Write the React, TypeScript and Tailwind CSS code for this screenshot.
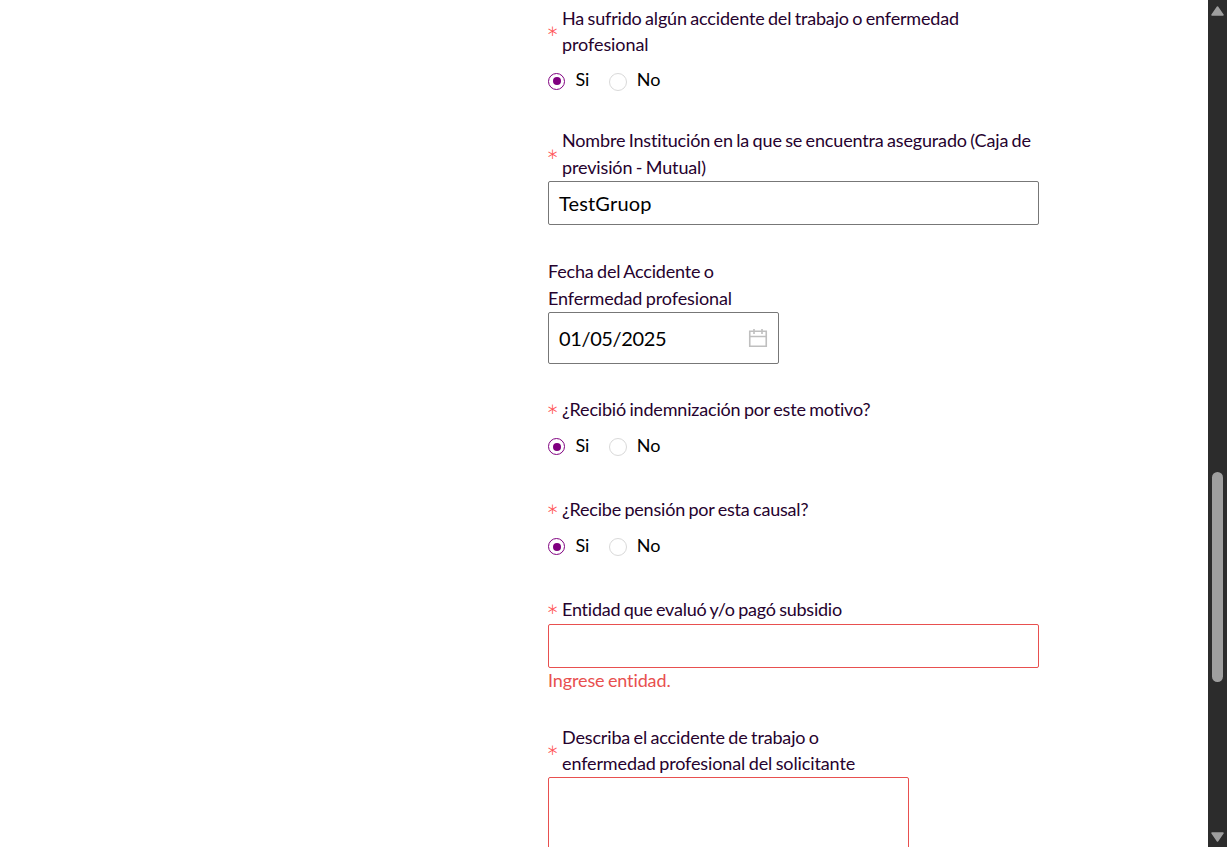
import React from "react";

type Line = { text: string; track?: string };

function Star() {
  return (
    <span className="flex h-[26px] w-[14px] shrink-0 items-center text-[31px] leading-none font-light text-[#ff4d4f]">
      <span className="-ml-[2px] pt-[15px]">*</span>
    </span>
  );
}

function Label({ lines, required = true, leading = "leading-[26.4px]" }: { lines: Line[]; required?: boolean; leading?: string }) {
  return (
    <div className="flex items-center">
      {required && <Star />}
      <div className={`text-[18px] whitespace-nowrap [word-spacing:-1px] ${leading}`}>
        {lines.map((l) => (
          <div key={l.text} className={l.track ?? "tracking-[-0.17px]"}>
            {l.text}
          </div>
        ))}
      </div>
    </div>
  );
}

function Radio({ label, checked, leading }: { label: string; checked?: boolean; leading: string }) {
  return (
    <div className={`flex items-start text-[18px] tracking-[-0.1px] text-black ${leading}`}>
      <span
        className={
          checked
            ? "mt-[6px] flex size-[17px] items-center justify-center rounded-full border border-[#800080]"
            : "mt-[6px] size-[18px] rounded-full border border-[#d9d9d9]"
        }
      >
        {checked && <span className="size-2 rounded-full bg-[#800080]" />}
      </span>
      <span className={checked ? "-mr-[0.5px] ml-[10.5px]" : "ml-[10px]"}>{label}</span>
    </div>
  );
}

function YesNo({ offset = "mt-[10px]", leading = "leading-[26px]" }: { offset?: string; leading?: string }) {
  return (
    <div className={`${offset} flex gap-5`}>
      <Radio label="Si" checked leading={leading} />
      <Radio label="No" leading={leading} />
    </div>
  );
}

function CalendarIcon() {
  return (
    <svg viewBox="0 0 20 20" className="size-5" fill="none" stroke="#bfbfbf" strokeWidth="1.6">
      <path d="M1.75 3.25h16.5v15H1.75zM1.75 8.5h16.5M6 1v5M14 1v5" />
    </svg>
  );
}

function Scrollbar() {
  return (
    <div className="flex w-[19px] flex-col items-center bg-[#2c2c2c]">
      <svg viewBox="0 0 13 10" className="mt-[6px] h-[10px] w-[13px]">
        <path d="M6.5 1 12 9H1z" fill="#9f9f9f" stroke="#9f9f9f" strokeWidth="1.5" strokeLinejoin="round" />
      </svg>
      <div className="mt-[456px] h-[210px] w-[11px] rounded-full bg-[#9f9f9f]" />
      <svg viewBox="0 0 13 10" className="mt-[150px] h-[10px] w-[13px]">
        <path d="M6.5 9 12 1H1z" fill="#9f9f9f" stroke="#9f9f9f" strokeWidth="1.5" strokeLinejoin="round" />
      </svg>
    </div>
  );
}

export default function App() {
  return (
    <div className="flex h-[847px] w-full justify-between overflow-hidden bg-white font-[Lato,sans-serif] text-[#26022e] [font-variant-ligatures:none]">
      <main className="ml-[548px] w-[491px] pt-[5px]">
        <div className="h-[122px]">
          <Label lines={[{ text: "Ha sufrido algún accidente del trabajo o enfermedad" }, { text: "profesional", track: "tracking-[-0.08px]" }]} />
          <YesNo offset="mt-[9px]" leading="leading-[25px]" />
        </div>
        <div className="h-[131px]">
          <Label
            leading="leading-[27px]"
            lines={[
              { text: "Nombre Institución en la que se encuentra asegurado (Caja de", track: "tracking-[-0.16px]" },
              { text: "previsión - Mutual)", track: "tracking-[-0.14px]" },
            ]}
          />
          <div className="flex h-[44px] items-center rounded-[2px] border border-[#777] px-[10px] text-[20px] tracking-[0.15px] text-black">
            TestGruop
          </div>
        </div>
        <div className="h-[138px]">
          <Label
            required={false}
            leading="leading-[27px]"
            lines={[{ text: "Fecha del Accidente o" }, { text: "Enfermedad profesional", track: "tracking-[-0.12px]" }]}
          />
          <div className="flex h-[52px] w-[231px] items-center justify-between rounded-[2px] border border-[#777] px-[10px] text-[20px] tracking-[-0.37px] text-black">
            01/05/2025
            <CalendarIcon />
          </div>
        </div>
        <div className="h-[100px]">
          <Label lines={[{ text: "¿Recibió indemnización por este motivo?", track: "tracking-[-0.18px]" }]} />
          <YesNo />
        </div>
        <div className="h-[100px]">
          <Label lines={[{ text: "¿Recibe pensión por esta causal?", track: "tracking-[-0.2px]" }]} />
          <YesNo />
        </div>
        <div className="h-[128px]">
          <Label lines={[{ text: "Entidad que evaluó y/o pagó subsidio", track: "tracking-[-0.23px]" }]} />
          <div className="mt-[2px] h-[44px] rounded-[2px] border border-[#e8504f]" />
          <div className="text-[18px] leading-[25px] tracking-[-0.12px] text-[#e8504f] [word-spacing:-1px]">Ingrese entidad.</div>
        </div>
        <Label
          lines={[
            { text: "Describa el accidente de trabajo o", track: "tracking-[-0.15px]" },
            { text: "enfermedad profesional del solicitante", track: "tracking-[-0.12px]" },
          ]}
        />
        <div className="h-[120px] w-[361px] rounded-[2px] border border-[#e8504f]" />
      </main>
      <Scrollbar />
    </div>
  );
}
